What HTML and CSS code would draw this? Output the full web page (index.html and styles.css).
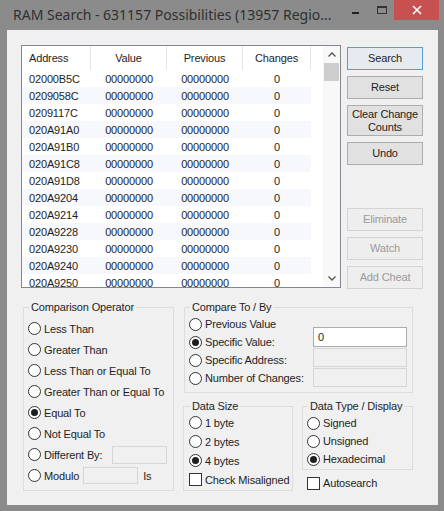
FILE: index.html
```html
<!DOCTYPE html>
<html lang="en">
<head>
    <meta charset="UTF-8">
    <title>RAM Search</title>
    <link rel="stylesheet" href="styles.css">
</head>
<body>
<div class="window">
    <div class="titlebar">
        <span class="title">RAM Search - 631157 Possibilities (13957 Regio...</span>
        <div class="controls">
            <span class="min"></span>
            <span class="max"></span>
            <span class="close">
                <svg width="10" height="10" viewBox="0 0 10 10"><path d="M1 1 L9 9 M9 1 L1 9" stroke="#fff" stroke-width="1.6" fill="none"/></svg>
            </span>
        </div>
    </div>

    <div class="client">
        <div class="top">
            <div class="list">
                <div class="grid">
                    <div class="head">
                        <span class="addr">Address</span><span>Value</span><span>Previous</span><span>Changes</span>
                    </div>
                    <div class="row"><span class="addr">02000B5C</span><span>00000000</span><span>00000000</span><span>0</span></div>
                    <div class="row alt"><span class="addr">0209058C</span><span>00000000</span><span>00000000</span><span>0</span></div>
                    <div class="row"><span class="addr">0209117C</span><span>00000000</span><span>00000000</span><span>0</span></div>
                    <div class="row alt"><span class="addr">020A91A0</span><span>00000000</span><span>00000000</span><span>0</span></div>
                    <div class="row"><span class="addr">020A91B0</span><span>00000000</span><span>00000000</span><span>0</span></div>
                    <div class="row alt"><span class="addr">020A91C8</span><span>00000000</span><span>00000000</span><span>0</span></div>
                    <div class="row"><span class="addr">020A91D8</span><span>00000000</span><span>00000000</span><span>0</span></div>
                    <div class="row alt"><span class="addr">020A9204</span><span>00000000</span><span>00000000</span><span>0</span></div>
                    <div class="row"><span class="addr">020A9214</span><span>00000000</span><span>00000000</span><span>0</span></div>
                    <div class="row alt"><span class="addr">020A9228</span><span>00000000</span><span>00000000</span><span>0</span></div>
                    <div class="row"><span class="addr">020A9230</span><span>00000000</span><span>00000000</span><span>0</span></div>
                    <div class="row alt"><span class="addr">020A9240</span><span>00000000</span><span>00000000</span><span>0</span></div>
                    <div class="row"><span class="addr">020A9250</span><span>00000000</span><span>00000000</span><span>0</span></div>
                </div>
                <div class="scroll">
                    <div class="arrow">
                        <svg width="8" height="5" viewBox="0 0 8 5"><path d="M0.5 4.5 L4 1 L7.5 4.5" stroke="#555" stroke-width="1.3" fill="none"/></svg>
                    </div>
                    <div class="thumb"></div>
                    <div class="track"></div>
                    <div class="arrow">
                        <svg width="8" height="5" viewBox="0 0 8 5"><path d="M0.5 0.5 L4 4 L7.5 0.5" stroke="#555" stroke-width="1.3" fill="none"/></svg>
                    </div>
                </div>
            </div>

            <div class="buttons">
                <button class="btn default">Search</button>
                <button class="btn">Reset</button>
                <button class="btn tall">Clear Change<br>Counts</button>
                <button class="btn">Undo</button>
                <button class="btn off gap">Eliminate</button>
                <button class="btn off">Watch</button>
                <button class="btn off">Add Cheat</button>
            </div>
        </div>

        <div class="bottom">
            <fieldset class="group operator">
                <legend>Comparison Operator</legend>
                <div class="opt"><span class="radio"></span>Less Than</div>
                <div class="opt"><span class="radio"></span>Greater Than</div>
                <div class="opt"><span class="radio"></span>Less Than or Equal To</div>
                <div class="opt"><span class="radio"></span>Greater Than or Equal To</div>
                <div class="opt"><span class="radio on"></span>Equal To</div>
                <div class="opt"><span class="radio"></span>Not Equal To</div>
                <div class="opt"><span class="radio"></span>Different By:<span class="edit off diff"></span></div>
                <div class="opt"><span class="radio"></span>Modulo<span class="edit off mod"></span><span class="is">Is</span></div>
            </fieldset>

            <div class="side">
                <fieldset class="group compare">
                    <legend>Compare To / By</legend>
                    <div class="cols">
                        <div class="opts">
                            <div class="opt"><span class="radio"></span>Previous Value</div>
                            <div class="opt"><span class="radio on"></span>Specific Value:</div>
                            <div class="opt"><span class="radio"></span>Specific Address:</div>
                            <div class="opt"><span class="radio"></span>Number of Changes:</div>
                        </div>
                        <div class="vals">
                            <span class="edit first">0</span>
                            <span class="edit off"></span>
                            <span class="edit off"></span>
                        </div>
                    </div>
                </fieldset>

                <div class="pair">
                    <fieldset class="group size">
                        <legend>Data Size</legend>
                        <div class="opt"><span class="radio"></span>1 byte</div>
                        <div class="opt"><span class="radio"></span>2 bytes</div>
                        <div class="opt"><span class="radio on"></span>4 bytes</div>
                        <div class="opt"><span class="check"></span>Check Misaligned</div>
                    </fieldset>
                    <div class="typecol">
                        <fieldset class="group type">
                            <legend>Data Type / Display</legend>
                            <div class="opt"><span class="radio"></span>Signed</div>
                            <div class="opt"><span class="radio"></span>Unsigned</div>
                            <div class="opt"><span class="radio on"></span>Hexadecimal</div>
                        </fieldset>
                        <div class="opt auto"><span class="check"></span>Autosearch</div>
                    </div>
                </div>
            </div>
        </div>
    </div>
</div>
</body>
</html>
```

FILE: styles.css
```css
* {
    box-sizing: border-box;
}

body {
    margin: 0;
    background: #8b8b8b;
    font-family: "Liberation Sans", Arial, sans-serif;
    font-size: 11px;
    letter-spacing: -0.15px;
    color: #1e1e1e;
}

.window {
    width: 444px;
    height: 511px;
    overflow: hidden;
}

/* title bar */
.titlebar {
    height: 30px;
    display: flex;
    align-items: flex-start;
}
.title {
    font-family: "Noto Sans", sans-serif;
    font-size: 14px;
    letter-spacing: 0;
    color: #303030;
    padding: 5px 0 0 13px;
    white-space: nowrap;
}
.controls {
    margin-left: auto;
    margin-right: 5px;
    display: flex;
    align-items: flex-start;
}
.min {
    width: 7px;
    height: 2px;
    background: #222;
    margin-top: 12px;
}
.max {
    width: 10px;
    height: 8px;
    border: 1px solid #333;
    border-top-width: 2px;
    margin: 6px 0 0 18px;
}
.close {
    width: 45px;
    height: 20px;
    margin-left: 7px;
    background: #c75050;
    display: flex;
    align-items: center;
    justify-content: center;
}

/* dialog body */
.client {
    margin-left: 7px;
    width: 431px;
    height: 475px;
    background: #f0f0f0;
    padding: 15px 0 0 14px;
}

.top {
    display: flex;
}

.list {
    width: 320px;
    height: 243px;
    border: 1px solid #828790;
    background: #fff;
    display: flex;
}
.grid {
    flex: 1;
    overflow: hidden;
}
.head, .row {
    display: grid;
    grid-template-columns: 69px 76px 76px 68px;
    align-items: center;
    width: 289px;
}
.head {
    height: 24px;
}
.head span {
    height: 24px;
    line-height: 24px;
    border-right: 1px solid #e5e5e5;
    text-align: center;
}
.head .addr, .row .addr {
    text-align: left;
    padding-left: 7px;
}
.row {
    height: 17px;
}
.row span {
    text-align: center;
}
.row.alt {
    background: #f6f8fc;
}

.scroll {
    width: 17px;
    background: #f8f8f8;
    display: flex;
    flex-direction: column;
}
.arrow {
    height: 17px;
    display: flex;
    align-items: center;
    justify-content: center;
}
.thumb {
    height: 18px;
    margin: 0 1px;
    background: #cdcdcd;
}
.track {
    flex: 1;
}

.buttons {
    margin-left: 6px;
    padding-top: 2px;
    width: 76px;
    display: flex;
    flex-direction: column;
    gap: 6px;
}
.btn {
    height: 23px;
    padding: 0;
    font-family: inherit;
    font-size: 11px;
    letter-spacing: -0.15px;
    color: #1e1e1e;
    background: #e1e1e1;
    border: 1px solid #adadad;
    line-height: 13px;
}
.btn.tall {
    height: 31px;
}
.btn.default {
    border-color: #5b9bd5;
    background: #e5ebf1;
}
.btn.off {
    color: #9a9a9a;
    background: #eeeeee;
    border-color: #d3d3d3;
}
.btn.gap {
    margin-top: 37px;
}

/* lower option groups */
.bottom {
    display: flex;
    align-items: flex-start;
    margin-top: 11px;
    margin-left: 2px;
}

.group {
    margin: 0;
    min-width: 0;
    border: 1px solid #dcdcdc;
    padding: 0 4px;
}
.group legend {
    padding: 0 2px;
    margin-left: 1px;
    line-height: 14px;
}

.opt {
    display: flex;
    align-items: center;
    white-space: nowrap;
}
.radio, .check {
    width: 13px;
    height: 13px;
    border: 1px solid #333;
    background: #fff;
    margin-right: 3px;
    flex: none;
    display: flex;
    align-items: center;
    justify-content: center;
}
.radio {
    border-radius: 50%;
}
.radio.on::after {
    content: "";
    width: 7px;
    height: 7px;
    border-radius: 50%;
    background: #1e1e1e;
}

.edit {
    display: block;
    height: 19px;
    border: 1px solid #abadb3;
    background: #fff;
    padding-left: 4px;
    line-height: 17px;
}
.edit.off {
    border-color: #d6d6d6;
    background: #f0f0f0;
}

.operator {
    width: 151px;
    padding-top: 4px;
    padding-bottom: 4px;
}
.operator .opt {
    height: 21px;
}
.operator .diff {
    width: 55px;
    height: 18px;
    margin-left: auto;
    margin-right: 2px;
}
.operator .mod {
    width: 55px;
    height: 17px;
    margin-left: 4px;
}
.operator .is {
    margin-left: 5px;
}

.side {
    margin-left: 9px;
    width: 230px;
}
.compare {
    width: 229px;
    margin-left: 1px;
    padding-top: 1px;
    padding-bottom: 5px;
}
.cols {
    display: flex;
}
.opts .opt {
    height: 18px;
}
.vals {
    margin-left: auto;
    margin-right: 1px;
    width: 94px;
    padding-top: 12px;
    display: flex;
    flex-direction: column;
    gap: 1px;
}
.vals .edit.first {
    height: 20px;
    line-height: 18px;
}

.pair {
    display: flex;
    align-items: flex-start;
    margin-top: 6px;
    gap: 9px;
}
.size {
    width: 110px;
    padding: 0 4px 1px 5px;
}
.size .opt {
    height: 19px;
}
.typecol {
    width: 111px;
}
.type {
    width: 111px;
    padding-top: 1px;
    padding-bottom: 1px;
}
.type .opt {
    height: 18px;
}
.auto {
    margin: 6px 0 0 5px;
    height: 14px;
}
```
